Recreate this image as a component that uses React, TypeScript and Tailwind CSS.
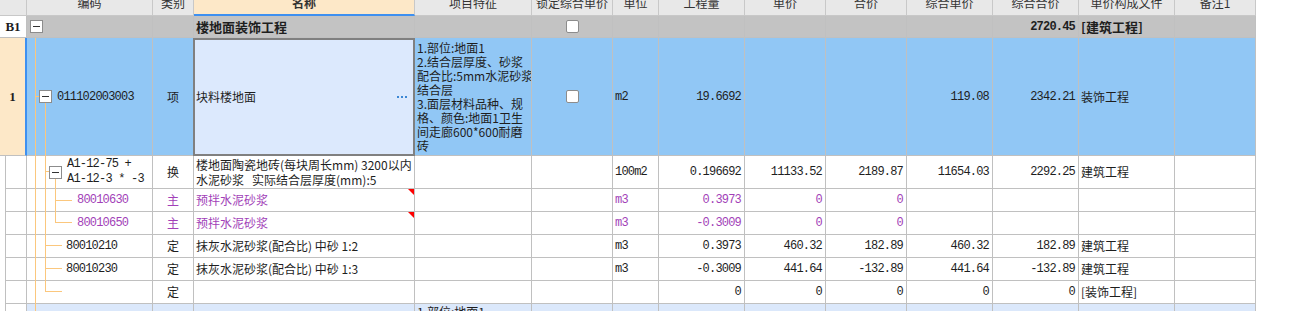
import React from 'react';

const W = [
  'w-[27px]',
  'w-[126px]',
  'w-[41px]',
  'w-[221px]',
  'w-[117px]',
  'w-[81px]',
  'w-[46px]',
  'w-[86px]',
  'w-[81px]',
  'w-[81px]',
  'w-[86px]',
  'w-[86px]',
  'w-[96px]',
  'w-[81px]',
];

const N = "font-['Liberation_Mono',monospace] text-[12px] tracking-[-0.8px]";

const headers = ['', '编码', '类别', '名称', '项目特征', '锁定综合单价', '单位', '工程量', '单价', '合价', '综合单价', '综合合价', '单价构成文件', '备注1'];

function Cell({ i, className = '', children }: { i: number; className?: string; children?: React.ReactNode }) {
  return <div className={`${W[i]} shrink-0 h-full border-r border-b border-[#c0c0c0] ${className}`}>{children}</div>;
}

function L({ i, className = '', children }: { i: number; className?: string; children?: React.ReactNode }) {
  return (
    <Cell i={i} className={`flex items-center pl-[2px] whitespace-nowrap overflow-hidden ${className}`}>
      {children}
    </Cell>
  );
}

function R({ i, className = '', children }: { i: number; className?: string; children?: React.ReactNode }) {
  return (
    <Cell i={i} className={`flex items-center justify-end pr-[3px] whitespace-nowrap ${N} ${className}`}>
      {children}
    </Cell>
  );
}

function M({ i, className = '', children }: { i: number; className?: string; children?: React.ReactNode }) {
  return (
    <Cell i={i} className={`flex items-center justify-center whitespace-nowrap ${className}`}>
      {children}
    </Cell>
  );
}

function MinusBox() {
  return (
    <div className="w-[13px] h-[13px] shrink-0 border border-[#8c8c8c] bg-white flex items-center justify-center">
      <div className="w-[7px] h-px bg-[#333333]" />
    </div>
  );
}

function Check() {
  return <div className="w-[13px] h-[13px] border border-[#8c8c8c] bg-white rounded-[2px]" />;
}

function ChildHead() {
  return (
    <div className="w-[27px] shrink-0 h-full pl-[5px] border-r border-[#c0c0c0] bg-white">
      <div className="h-full border-l border-b border-[#c0c0c0]" />
    </div>
  );
}

type Kid = {
  code: string;
  pl: string;
  type: string;
  name: string;
  unit: string;
  qty: string;
  price: string;
  total: string;
  up: string;
  ut: string;
  file: string;
  purple?: boolean;
};

const kids: Kid[] = [
  { code: '80010630', pl: 'pl-[50px]', type: '主', name: '预拌水泥砂浆', unit: 'm3', qty: '0.3973', price: '0', total: '0', up: '', ut: '', file: '', purple: true },
  { code: '80010650', pl: 'pl-[50px]', type: '主', name: '预拌水泥砂浆', unit: 'm3', qty: '-0.3009', price: '0', total: '0', up: '', ut: '', file: '', purple: true },
  { code: '80010210', pl: 'pl-[39px]', type: '定', name: '抹灰水泥砂浆(配合比) 中砂 1:2', unit: 'm3', qty: '0.3973', price: '460.32', total: '182.89', up: '460.32', ut: '182.89', file: '建筑工程' },
  { code: '80010230', pl: 'pl-[39px]', type: '定', name: '抹灰水泥砂浆(配合比) 中砂 1:3', unit: 'm3', qty: '-0.3009', price: '441.64', total: '-132.89', up: '441.64', ut: '-132.89', file: '建筑工程' },
  { code: '', pl: 'pl-[39px]', type: '定', name: '', unit: '', qty: '0', price: '0', total: '0', up: '0', ut: '0', file: '[装饰工程]' },
];

export default function App() {
  return (
    <div className="relative w-[1312px] h-[311px] overflow-hidden bg-white text-[12px] text-[#1e1e1e] font-['Noto_Sans_CJK_SC',sans-serif]">
      {/* header */}
      <div className="flex w-[1256px] h-[16px]">
        {headers.map((h, i) =>
          i === 3 ? (
            <div
              key={i}
              className={`${W[i]} shrink-0 h-full overflow-hidden border-r border-r-[#c8c8c8] border-b-2 border-b-[#3e90f0] bg-[#fde8c8] flex justify-center font-bold text-[#333333]`}
            >
              <span className="block leading-[12px] mt-[-3px]">{h}</span>
            </div>
          ) : (
            <div
              key={i}
              className={`${W[i]} shrink-0 h-full overflow-hidden border-r border-b border-[#c8c8c8] bg-[#e8e8e8] flex justify-center text-[#333333]`}
            >
              <span className="block leading-[12px] mt-[-3px]">{h}</span>
            </div>
          )
        )}
      </div>

      {/* B1 row */}
      <div className="flex w-[1256px] h-[22px]">
        <div className="w-[27px] shrink-0 h-full bg-white border-r border-b border-[#c0c0c0] flex items-center justify-center font-['Liberation_Serif',serif] font-bold text-[13px]">
          B1
        </div>
        <Cell i={1} className="bg-[#c3c3c3] flex items-center pl-[3px]">
          <MinusBox />
        </Cell>
        <Cell i={2} className="bg-[#c3c3c3]" />
        <L i={3} className="bg-[#c3c3c3] font-bold text-[13px]">
          楼地面装饰工程
        </L>
        <Cell i={4} className="bg-[#c3c3c3]" />
        <M i={5} className="bg-[#c3c3c3]">
          <Check />
        </M>
        <Cell i={6} className="bg-[#c3c3c3]" />
        <Cell i={7} className="bg-[#c3c3c3]" />
        <Cell i={8} className="bg-[#c3c3c3]" />
        <Cell i={9} className="bg-[#c3c3c3]" />
        <Cell i={10} className="bg-[#c3c3c3]" />
        <R i={11} className="bg-[#c3c3c3] font-bold">
          2720.45
        </R>
        <L i={12} className="bg-[#c3c3c3] font-bold text-[13px]">
          [建筑工程]
        </L>
        <Cell i={13} className="bg-[#c3c3c3]" />
      </div>

      {/* row 1 */}
      <div className="flex w-[1256px] h-[118px] bg-[#91c7f5]">
        <div className="w-[27px] shrink-0 h-full bg-[#fde8c8] border-r-2 border-r-[#3e90f0] border-b border-b-[#c0c0c0] flex items-center justify-center font-['Liberation_Serif',serif] font-bold text-[13px]">
          1
        </div>
        <Cell i={1} className="flex items-center pl-[12px] gap-[5px]">
          <MinusBox />
          <span className={N}>011102003003</span>
        </Cell>
        <M i={2}>项</M>
        <Cell i={3} className="relative">
          <div className="absolute left-[-1px] top-0 right-[-1px] bottom-[-1px] border-2 border-[#808080] bg-[#dce9fd] flex items-center justify-between pl-[1px] pr-[6px]">
            <span>块料楼地面</span>
            <span className="flex gap-[2px]">
              <span className="w-[2px] h-[2px] bg-[#3c87d4]" />
              <span className="w-[2px] h-[2px] bg-[#3c87d4]" />
              <span className="w-[2px] h-[2px] bg-[#3c87d4]" />
            </span>
          </div>
        </Cell>
        <Cell i={4} className="flex items-center pl-[2px] whitespace-nowrap overflow-hidden leading-[14px]">
          <div>
            1.部位:地面1
            <br />
            2.结合层厚度、砂浆
            <br />
            配合比:5mm水泥砂浆
            <br />
            结合层
            <br />
            3.面层材料品种、规
            <br />
            格、颜色:地面1卫生
            <br />
            间走廊600*600耐磨
            <br />砖
          </div>
        </Cell>
        <M i={5}>
          <Check />
        </M>
        <L i={6} className={N}>
          m2
        </L>
        <R i={7}>19.6692</R>
        <Cell i={8} />
        <Cell i={9} />
        <R i={10}>119.08</R>
        <R i={11}>2342.21</R>
        <L i={12}>装饰工程</L>
        <Cell i={13} />
      </div>

      {/* 换 row */}
      <div className="flex w-[1256px] h-[33px] bg-white">
        <ChildHead />
        <Cell i={1} className="flex items-center pl-[22px] gap-[5px]">
          <MinusBox />
          <span className={`${N} leading-[15px] whitespace-nowrap`}>
            A1-12-75 +
            <br />
            A1-12-3 * -3
          </span>
        </Cell>
        <M i={2}>换</M>
        <Cell i={3} className="flex items-center pl-[2px] whitespace-nowrap overflow-hidden leading-[15px]">
          <div>
            楼地面陶瓷地砖(每块周长mm) 3200以内
            <br />
            水泥砂浆&nbsp;&nbsp;&nbsp;实际结合层厚度(mm):5
          </div>
        </Cell>
        <Cell i={4} />
        <Cell i={5} />
        <L i={6} className={N}>
          100m2
        </L>
        <R i={7}>0.196692</R>
        <R i={8}>11133.52</R>
        <R i={9}>2189.87</R>
        <R i={10}>11654.03</R>
        <R i={11}>2292.25</R>
        <L i={12}>建筑工程</L>
        <Cell i={13} />
      </div>

      {kids.map((k, idx) => (
        <div key={idx} className={`flex w-[1256px] h-[23px] bg-white ${k.purple ? 'text-[#a23fb8]' : ''}`}>
          <ChildHead />
          <Cell i={1} className={`flex items-center ${k.pl}`}>
            <span className={N}>{k.code}</span>
          </Cell>
          <M i={2}>{k.type}</M>
          <Cell i={3} className="relative flex items-center pl-[2px] whitespace-nowrap overflow-hidden">
            {k.name}
            {k.purple ? (
              <svg className="absolute top-0 right-0" width="6" height="6" viewBox="0 0 6 6">
                <polygon points="0,0 6,0 6,6" fill="#ff0000" />
              </svg>
            ) : null}
          </Cell>
          <Cell i={4} />
          <Cell i={5} />
          <L i={6} className={N}>
            {k.unit}
          </L>
          <R i={7}>{k.qty}</R>
          <R i={8}>{k.price}</R>
          <R i={9}>{k.total}</R>
          <R i={10}>{k.up}</R>
          <R i={11}>{k.ut}</R>
          <L i={12}>{k.file}</L>
          <Cell i={13} />
        </div>
      ))}

      {/* last partial row */}
      <div className="flex w-[1256px] h-[30px] bg-[#dbe8fb]">
        <ChildHead />
        <Cell i={1} />
        <Cell i={2} />
        <Cell i={3} />
        <Cell i={4} className="pl-[2px] pt-[1px] whitespace-nowrap overflow-hidden leading-[14px]">
          1.部位:地面1
        </Cell>
        <Cell i={5} />
        <Cell i={6} />
        <Cell i={7} />
        <Cell i={8} />
        <Cell i={9} />
        <Cell i={10} />
        <Cell i={11} />
        <Cell i={12} />
        <Cell i={13} />
      </div>

      {/* tree connector lines */}
      <svg className="absolute top-0 left-0 pointer-events-none" width="1312" height="311" viewBox="0 0 1312 311">
        <g fill="#fbc77d">
          <rect x="35" y="38" width="1" height="273" />
          <rect x="35" y="96" width="4" height="1" />
          <rect x="45" y="103" width="1" height="189" />
          <rect x="45" y="171" width="4" height="1" />
          <rect x="55" y="179" width="1" height="44" />
          <rect x="55" y="200" width="17" height="1" />
          <rect x="55" y="222" width="17" height="1" />
          <rect x="45" y="245" width="17" height="1" />
          <rect x="45" y="268" width="17" height="1" />
          <rect x="45" y="291" width="17" height="1" />
        </g>
      </svg>
    </div>
  );
}
